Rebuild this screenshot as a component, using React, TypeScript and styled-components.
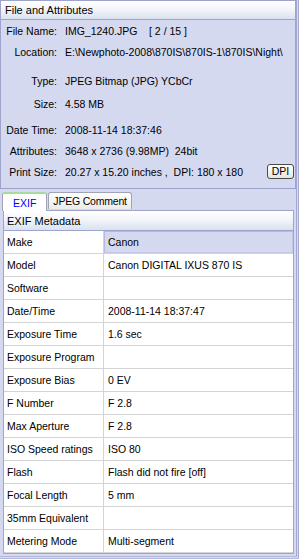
import React from 'react';
import styled, {createGlobalStyle} from 'styled-components';

const GlobalStyle = createGlobalStyle`
  html, body {
    margin: 0;
    padding: 0;
    background: #d5d9f0;
  }
  body {
    font-family: "Liberation Sans", Arial, sans-serif;
    font-size: 11px;
    color: #000;
  }
`;

const Window = styled.div`
  width: 299px;
  height: 559px;
  box-sizing: border-box;
  background: #d5d9f0;
  border-right: 3px double #a4a9d4;
  border-bottom: 3px double #b4b8dc;
  display: flex;
  flex-direction: column;
  overflow: hidden;
`;

const Panel = styled.section`
  height: 189px;
  box-sizing: border-box;
  border: 1px solid #9fa4cc;
  display: flex;
  flex-direction: column;
`;

const PanelHeader = styled.div`
  height: 19px;
  flex: none;
  box-sizing: border-box;
  padding-left: 4px;
  display: flex;
  align-items: center;
  background: linear-gradient(#ffffff 0%, #f3f5fa 45%, #d9e2ef 100%);
  border-bottom: 1px solid #9fa4cc;
  font-size: 11px;
`;

const FieldList = styled.div`
  display: flex;
  flex-direction: column;
`;

const FieldRow = styled.div<{ $gap?: number }>`
  height: 21px;
  margin-top: ${p => p.$gap || 0}px;
  display: flex;
  align-items: center;
  padding-right: 1px;
`;

const FieldLabel = styled.span`
  width: 56px;
  flex: none;
  text-align: right;
  white-space: nowrap;
  font-size: 10.5px;
`;

const FieldValue = styled.span`
  margin-left: 8px;
  flex: 1;
  white-space: pre;
  font-size: 10.5px;
`;

const DpiButton = styled.button`
  width: 27px;
  height: 15px;
  padding: 0;
  flex: none;
  box-sizing: border-box;
  border: 1px solid #4a4a4a;
  border-radius: 3px;
  background: linear-gradient(#ffffff, #e6e6e0);
  font-family: "Liberation Sans", Arial, sans-serif;
  font-size: 10.5px;
  color: #000;
  line-height: 13px;
`;

const TabBar = styled.div`
  height: 21px;
  flex: none;
  display: flex;
  align-items: flex-end;
  padding-left: 2px;
  gap: 1px;
`;

const Tab = styled.div<{ $active?: boolean }>`
  height: ${p => (p.$active ? 19 : 17)}px;
  box-sizing: border-box;
  padding: 0 ${p => (p.$active ? 10 : 4)}px;
  margin-bottom: ${p => (p.$active ? -1 : 1)}px;
  display: flex;
  align-items: center;
  border: 1px solid #a0a4b4;
  border-bottom: none;
  border-top: ${p => (p.$active ? '2px solid #a8dc9c' : '1px solid #a0a4b4')};
  border-radius: 3px 3px 0 0;
  background: ${p => (p.$active ? '#ffffff' : 'linear-gradient(#ffffff, #ecebe6)')};
  color: ${p => (p.$active ? '#0000ff' : '#000')};
  font-size: 10.5px;
  letter-spacing: ${p => (p.$active ? 0 : -0.2)}px;
  position: relative;
  z-index: ${p => (p.$active ? 1 : 0)};
`;

const TablePanel = styled.section`
  margin: 0 2px 0 3px;
  box-sizing: border-box;
  border: 1px solid #9fa4cc;
  background: #ffffff;
  display: flex;
  flex-direction: column;
`;

const TableHeader = styled(PanelHeader)`
  height: 20px;
  padding-left: 3px;
`;

const MetaRow = styled.div`
  height: 23px;
  box-sizing: border-box;
  display: grid;
  grid-template-columns: 100px 1fr;
  border-bottom: 1px solid #d4d4d4;
`;

const KeyCell = styled.div`
  display: flex;
  align-items: center;
  padding-left: 3px;
  border-right: 1px solid #d4d4d4;
  white-space: nowrap;
  font-size: 10.5px;
`;

const ValueCell = styled.div<{ $selected?: boolean }>`
  display: flex;
  align-items: center;
  padding-left: 4px;
  white-space: nowrap;
  font-size: 10.5px;
  background: ${p => (p.$selected ? '#d5d9f0' : '#ffffff')};
  box-shadow: ${p => (p.$selected ? 'inset 1px 1px 0 #b6badc, inset -1px -1px 0 #c4c8e6' : 'none')};
`;

const fields: { label: string; value: string; gap?: number; dpi?: boolean }[] = [
  {label: 'File Name:', value: 'IMG_1240.JPG    [ 2 / 15 ]'},
  {label: 'Location:', value: 'E:\\Newphoto-2008\\870IS\\870IS-1\\870IS\\Night\\'},
  {label: 'Type:', value: 'JPEG Bitmap (JPG) YCbCr', gap: 8},
  {label: 'Size:', value: '4.58 MB', gap: 2},
  {label: 'Date Time:', value: '2008-11-14 18:37:46', gap: 5},
  {label: 'Attributes:', value: '3648 x 2736 (9.98MP)  24bit'},
  {label: 'Print Size:', value: '20.27 x 15.20 inches ,  DPI: 180 x 180', dpi: true},
];

const exif: [string, string][] = [
  ['Make', 'Canon'],
  ['Model', 'Canon DIGITAL IXUS 870 IS'],
  ['Software', ''],
  ['Date/Time', '2008-11-14 18:37:47'],
  ['Exposure Time', '1.6 sec'],
  ['Exposure Program', ''],
  ['Exposure Bias', '0 EV'],
  ['F Number', 'F 2.8'],
  ['Max Aperture', 'F 2.8'],
  ['ISO Speed ratings', 'ISO 80'],
  ['Flash', 'Flash did not fire [off]'],
  ['Focal Length', '5 mm'],
  ['35mm Equivalent', ''],
  ['Metering Mode', 'Multi-segment'],
];

const App = () => {
  return (
    <>
      <GlobalStyle />
      <Window>
        <Panel>
          <PanelHeader>File and Attributes</PanelHeader>
          <FieldList>
            {fields.map(f => (
              <FieldRow key={f.label} $gap={f.gap}>
                <FieldLabel>{f.label}</FieldLabel>
                <FieldValue>{f.value}</FieldValue>
                {f.dpi && <DpiButton>DPI</DpiButton>}
              </FieldRow>
            ))}
          </FieldList>
        </Panel>
        <TabBar>
          <Tab $active>EXIF</Tab>
          <Tab>JPEG Comment</Tab>
        </TabBar>
        <TablePanel>
          <TableHeader>EXIF Metadata</TableHeader>
          {exif.map(([k, v], i) => (
            <MetaRow key={k}>
              <KeyCell>{k}</KeyCell>
              <ValueCell $selected={i === 0}>{v}</ValueCell>
            </MetaRow>
          ))}
        </TablePanel>
      </Window>
    </>
  );
};

export default App;
